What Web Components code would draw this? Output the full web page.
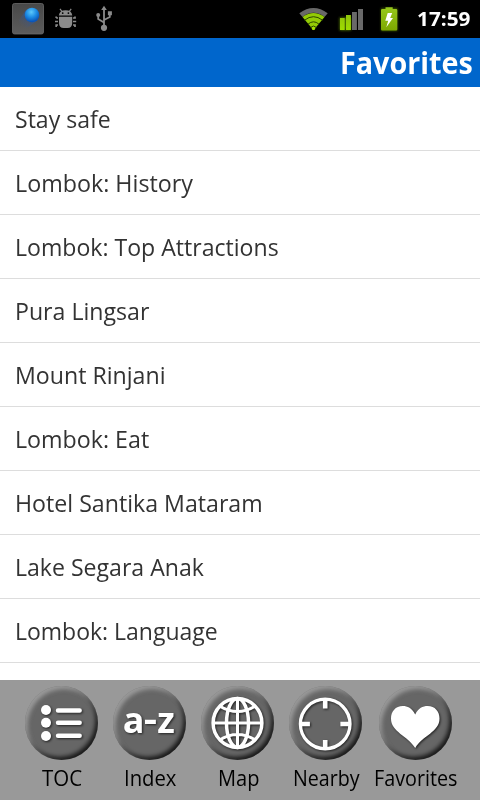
<!DOCTYPE html>
<html lang="en">
<head>
<meta charset="utf-8">
<title>Favorites</title>
<style>
    body {
        margin: 0;
        font-family: "Open Sans", "Noto Sans", sans-serif;
        background: #fff;
    }
</style>
</head>
<body>
<guide-app></guide-app>

<script>
// text squeezed to a given advance width
class FitText extends HTMLElement{
    constructor(){
        super();
        this.shadowDOM = this.attachShadow({mode: "open"});
        this.shadowDOM.innerHTML = `
        <style>
        :host {
            display: block;
            white-space: nowrap;
        }
        span {
            display: inline-block;
            transform-origin: 0 50%;
        }
        </style>
        <span><slot></slot></span>
        `;
    }

    connectedCallback(){
        const width = Number(this.getAttribute("width"));
        const span = this.shadowDOM.querySelector("span");
        this.style.width = width + "px";
        span.style.transform = `scaleX(${width / span.offsetWidth})`;
    }
}

class StatusBar extends HTMLElement{
    constructor(){
        super();
        this.shadowDOM = this.attachShadow({mode: "open"});
        this.shadowDOM.innerHTML = `
        <style>
        :host {
            display: flex;
            align-items: center;
            box-sizing: border-box;
            height: 38px;
            padding: 0 10px 0 12px;
            background: #000;
            color: #fff;
        }
        svg {
            display: block;
        }
        .left, .right {
            display: flex;
            align-items: center;
        }
        .right {
            margin-left: auto;
        }
        fit-text {
            margin-left: 17px;
            font-size: 20px;
            font-weight: 700;
            line-height: 38px;
        }
        </style>
        <div class="left">
            <svg width="110" height="38" viewBox="12 0 110 38">
                <defs>
                    <linearGradient id="tile" x1="0" y1="0" x2="0" y2="1">
                        <stop offset="0" stop-color="#484848"/><stop offset="1" stop-color="#5c5c5c"/>
                    </linearGradient>
                    <radialGradient id="ball" cx=".45" cy=".3" r=".65">
                        <stop offset="0" stop-color="#5cc8fa"/><stop offset=".55" stop-color="#1d8ce4"/><stop offset="1" stop-color="#0b55b8"/>
                    </radialGradient>
                    <linearGradient id="trail" x1="1" y1="0" x2="0" y2="1">
                        <stop offset=".3" stop-color="#2458a8" stop-opacity=".8"/><stop offset=".9" stop-color="#4a5878" stop-opacity="0"/>
                    </linearGradient>
                </defs>
                <rect x="12.5" y="3.5" width="31" height="30.5" rx="2" fill="url(#tile)" stroke="#6a6a6a" stroke-width=".8"/>
                <path d="M26 10L19 20Q19 29 27 28L38 20Z" fill="url(#trail)"/>
                <circle cx="32" cy="15" r="7.3" fill="url(#ball)"/>
                <g fill="#8b8b8b">
                    <path d="M58.8 15.6Q59.5 10.2 65.6 10.2T72.3 15.6Z"/>
                    <path d="M60 8.8L62.3 12M71.2 8.8L68.9 12" stroke="#8b8b8b" stroke-width="1.2"/>
                    <path d="M59 16.7H72.2V23Q72.2 28 67.5 28H63.7Q59 28 59 23Z"/>
                    <path d="M58 18H56.2M58 21.5H55M58 25H56.2V27M73 18H75V16.5M73 21.5H76.2M73 25H75V27M56.2 18V16.5" fill="none" stroke="#8b8b8b" stroke-width="1.7"/>
                </g>
                <circle cx="62.7" cy="13.1" r=".9" fill="#000"/><circle cx="68.4" cy="13.1" r=".9" fill="#000"/>
                <g fill="none" stroke="#8b8b8b" stroke-width="1.8">
                    <path d="M104 9V27M104 22.5L98.2 19V15.5M104 20L109.8 17V13"/>
                </g>
                <path d="M104 5.8L106.8 10H101.2ZM107.9 11.2H111.9V15.2H107.9Z" fill="#8b8b8b"/>
                <circle cx="98.2" cy="15" r="2" fill="#8b8b8b"/><circle cx="104" cy="27.8" r="3.1" fill="#8b8b8b"/>
            </svg>
        </div>
        <div class="right">
            <svg width="102" height="38" viewBox="298 0 102 38">
                <defs>
                    <linearGradient id="green" x1="0" y1="0" x2="0" y2="1">
                        <stop offset="0" stop-color="#8fc40a"/><stop offset="1" stop-color="#9fdc00"/>
                    </linearGradient>
                    <linearGradient id="cell" x1="0" y1="0" x2="0" y2="1">
                        <stop offset="0" stop-color="#97c81c"/><stop offset="1" stop-color="#7da800"/>
                    </linearGradient>
                    <filter id="glow" x="-30%" y="-30%" width="160%" height="160%"><feGaussianBlur stdDeviation="1"/></filter>
                </defs>
                <path d="M299.3 13.3Q313.5 2.8 327.7 13.3L324.5 17Q313.5 8.6 302.5 17Z" fill="#686868"/>
                <path d="M302.5 17Q313.5 9 324.5 17L313.5 30.3Z" fill="#93cb06"/>
                <g fill="none" stroke="#2c4400" stroke-width="1">
                    <path d="M304.5 20.2Q313.5 13.2 322.5 20.2"/>
                    <path d="M308 24.2Q313.5 19.4 319 24.2"/>
                    <path d="M310.5 27.5Q313.5 24.6 316.5 27.5"/>
                </g>
                <circle cx="313.5" cy="28.4" r="1.7" fill="#a4e000"/>
                <path d="M339.5 17.5H351V30.5H339.5Z" fill="#4a6c00" filter="url(#glow)"/>
                <path d="M340 18H344.7V30H340ZM346 15H350.9V30H346Z" fill="url(#green)"/>
                <path d="M352 12H356.9V30H352ZM358 9H363V30H358Z" fill="#696969"/>
                <path d="M381 8H397.5V31H381Z" fill="#385000" filter="url(#glow)"/>
                <path d="M385.5 7.2H392.7V9H396Q397.3 9 397.3 10.3V29.2Q397.3 30.5 396 30.5H382.3Q381 30.5 381 29.2V10.3Q381 9 382.3 9H385.5Z" fill="url(#cell)"/>
                <path d="M387.7 13H392.2L390.2 18H393L386.3 27.3L388.2 20.7H385.3Z" fill="#fff"/>
            </svg>
            <fit-text width="53">17:59</fit-text>
        </div>
        `;
    }
}

class TitleBar extends HTMLElement{
    constructor(){
        super();
        this.shadowDOM = this.attachShadow({mode: "open"});
        this.shadowDOM.innerHTML = `
        <style>
        :host {
            display: flex;
            justify-content: flex-end;
            box-sizing: border-box;
            height: 49px;
            padding-right: 7px;
            background: #0066cc;
            color: #fff;
            font-size: 30px;
            font-weight: 700;
            line-height: 50px;
        }
        </style>
        <fit-text width="133">Favorites</fit-text>
        `;
    }
}

class FavoriteItem extends HTMLElement{
    constructor(){
        super();
        this.shadowDOM = this.attachShadow({mode: "open"});
    }

    set favorite(item){
        this.shadowDOM.innerHTML = `
        <style>
        :host {
            display: block;
            box-sizing: border-box;
            height: 64px;
            padding-left: 15px;
            border-bottom: 1px solid #ddd;
            color: #333;
            font-size: 24px;
            line-height: 63px;
        }
        </style>
        <fit-text width="${item.width}">${item.name}</fit-text>
        `;
    }
}

class FavoriteList extends HTMLElement{
    constructor(){
        super();
        this.shadowDOM = this.attachShadow({mode: "open"});
    }

    set items(items){
        this.shadowDOM.innerHTML = `
        <style>
        :host {
            display: block;
            overflow: hidden;
            background: #fff;
        }
        </style>
        `;
        items.forEach(item => {
            const element = document.createElement("favorite-item");
            element.favorite = item;
            this.shadowDOM.appendChild(element);
        });
    }
}

const icons = {
    toc: `
        <g fill="#fff"><circle cx="21" cy="24" r="5"/><circle cx="21" cy="36.7" r="5"/><circle cx="21" cy="50" r="5"/></g>
        <path d="M33 24.5H54.7M33 36.7H54.7M33 49.7H54.7" stroke="#fff" stroke-width="4.4" stroke-linecap="round"/>`,
    index: `
        <text x="9.8" y="46.6" font-size="36" font-weight="700" fill="#fff">a<tspan x="30.4" y="47.6" font-size="43" font-weight="600">-</tspan><tspan x="44.3" y="46.6">z</tspan></text>`,
    map: `
        <g fill="none" stroke="#fff" stroke-width="3.5">
            <circle cx="36.5" cy="37" r="24.4"/>
            <ellipse cx="36.5" cy="37" rx="11" ry="24.4"/>
            <path d="M36.5 12.5V61.5M12 37H61M18.5 20Q36.5 31 54.5 20M18.5 54Q36.5 43 54.5 54" stroke-width="3"/>
        </g>`,
    nearby: `
        <circle cx="36.2" cy="38" r="24.8" fill="none" stroke="#fff" stroke-width="3.3"/>
        <path d="M36.2 12V22.5M36.2 54V64M10.4 38H20.9M51.4 38H61.9" stroke="#fff" stroke-width="4.6"/>`,
    heart: `
        <path d="M36.2 28.4C33 22 28.5 20 23.8 20C16.5 20 12 25.5 12 32.5C12 46 28.5 49.5 36.2 62C43.5 49.5 60.5 46 60.5 32.5C60.5 25.5 56 20 48.6 20C43.8 20 39.3 22 36.2 28.4Z" fill="#fff"/>`
};

class TabButton extends HTMLElement{
    constructor(){
        super();
        this.shadowDOM = this.attachShadow({mode: "open"});
    }

    connectedCallback(){
        this.shadowDOM.innerHTML = `
        <style>
        :host {
            display: flex;
            flex-direction: column;
            align-items: center;
            color: #000;
            font-size: 22px;
            line-height: 30px;
        }
        .disc {
            width: 73px;
            height: 74px;
            border-radius: 50%;
            background: #666;
            box-shadow: inset 2.5px 3px 4px rgba(190,190,190,.6), inset -2.5px -3px 4px rgba(0,0,0,.75);
        }
        svg {
            display: block;
            filter: drop-shadow(1px 1.5px 1px rgba(0,0,0,.65));
        }
        fit-text {
            margin: 2px 0 0 1px;
        }
        </style>
        <div class="disc"><svg width="73" height="74">${icons[this.getAttribute("icon")]}</svg></div>
        <fit-text width="${this.getAttribute("label-width")}"></fit-text>
        `;
        const label = this.shadowDOM.querySelector("fit-text");
        label.textContent = this.getAttribute("label");
        label.connectedCallback();
    }
}

class TabBar extends HTMLElement{
    constructor(){
        super();
        this.shadowDOM = this.attachShadow({mode: "open"});
        this.shadowDOM.innerHTML = `
        <style>
        :host {
            display: grid;
            grid-template-columns: 88px 88px 88px 88px 92px;
            box-sizing: border-box;
            height: 120px;
            padding: 6px 0 0 17.5px;
            background: #999;
        }
        </style>
        <tab-button icon="toc" label="TOC" label-width="40"></tab-button>
        <tab-button icon="index" label="Index" label-width="52.5"></tab-button>
        <tab-button icon="map" label="Map" label-width="41"></tab-button>
        <tab-button icon="nearby" label="Nearby" label-width="67"></tab-button>
        <tab-button icon="heart" label="Favorites" label-width="83.5"></tab-button>
        `;
    }
}

class GuideApp extends HTMLElement{
    constructor(){
        super();
        this.shadowDOM = this.attachShadow({mode: "open"});
        this.shadowDOM.innerHTML = `
        <style>
        :host {
            display: grid;
            grid-template-rows: 38px 49px 1fr 120px;
            height: 800px;
            overflow: hidden;
        }
        </style>
        <status-bar></status-bar>
        <title-bar></title-bar>
        <favorite-list></favorite-list>
        <tab-bar></tab-bar>
        `;
    }

    connectedCallback(){
        this.shadowDOM.querySelector("favorite-list").items = [
            {name: "Stay safe", width: 96},
            {name: "Lombok: History", width: 177.5},
            {name: "Lombok: Top Attractions", width: 263.5},
            {name: "Pura Lingsar", width: 134},
            {name: "Mount Rinjani", width: 150.5},
            {name: "Lombok: Eat", width: 134.5},
            {name: "Hotel Santika Mataram", width: 248},
            {name: "Lake Segara Anak", width: 188.5},
            {name: "Lombok: Language", width: 203}
        ];
    }
}

customElements.define("fit-text", FitText);
customElements.define("status-bar", StatusBar);
customElements.define("title-bar", TitleBar);
customElements.define("favorite-item", FavoriteItem);
customElements.define("favorite-list", FavoriteList);
customElements.define("tab-button", TabButton);
customElements.define("tab-bar", TabBar);
customElements.define("guide-app", GuideApp);
</script>
</body>
</html>
